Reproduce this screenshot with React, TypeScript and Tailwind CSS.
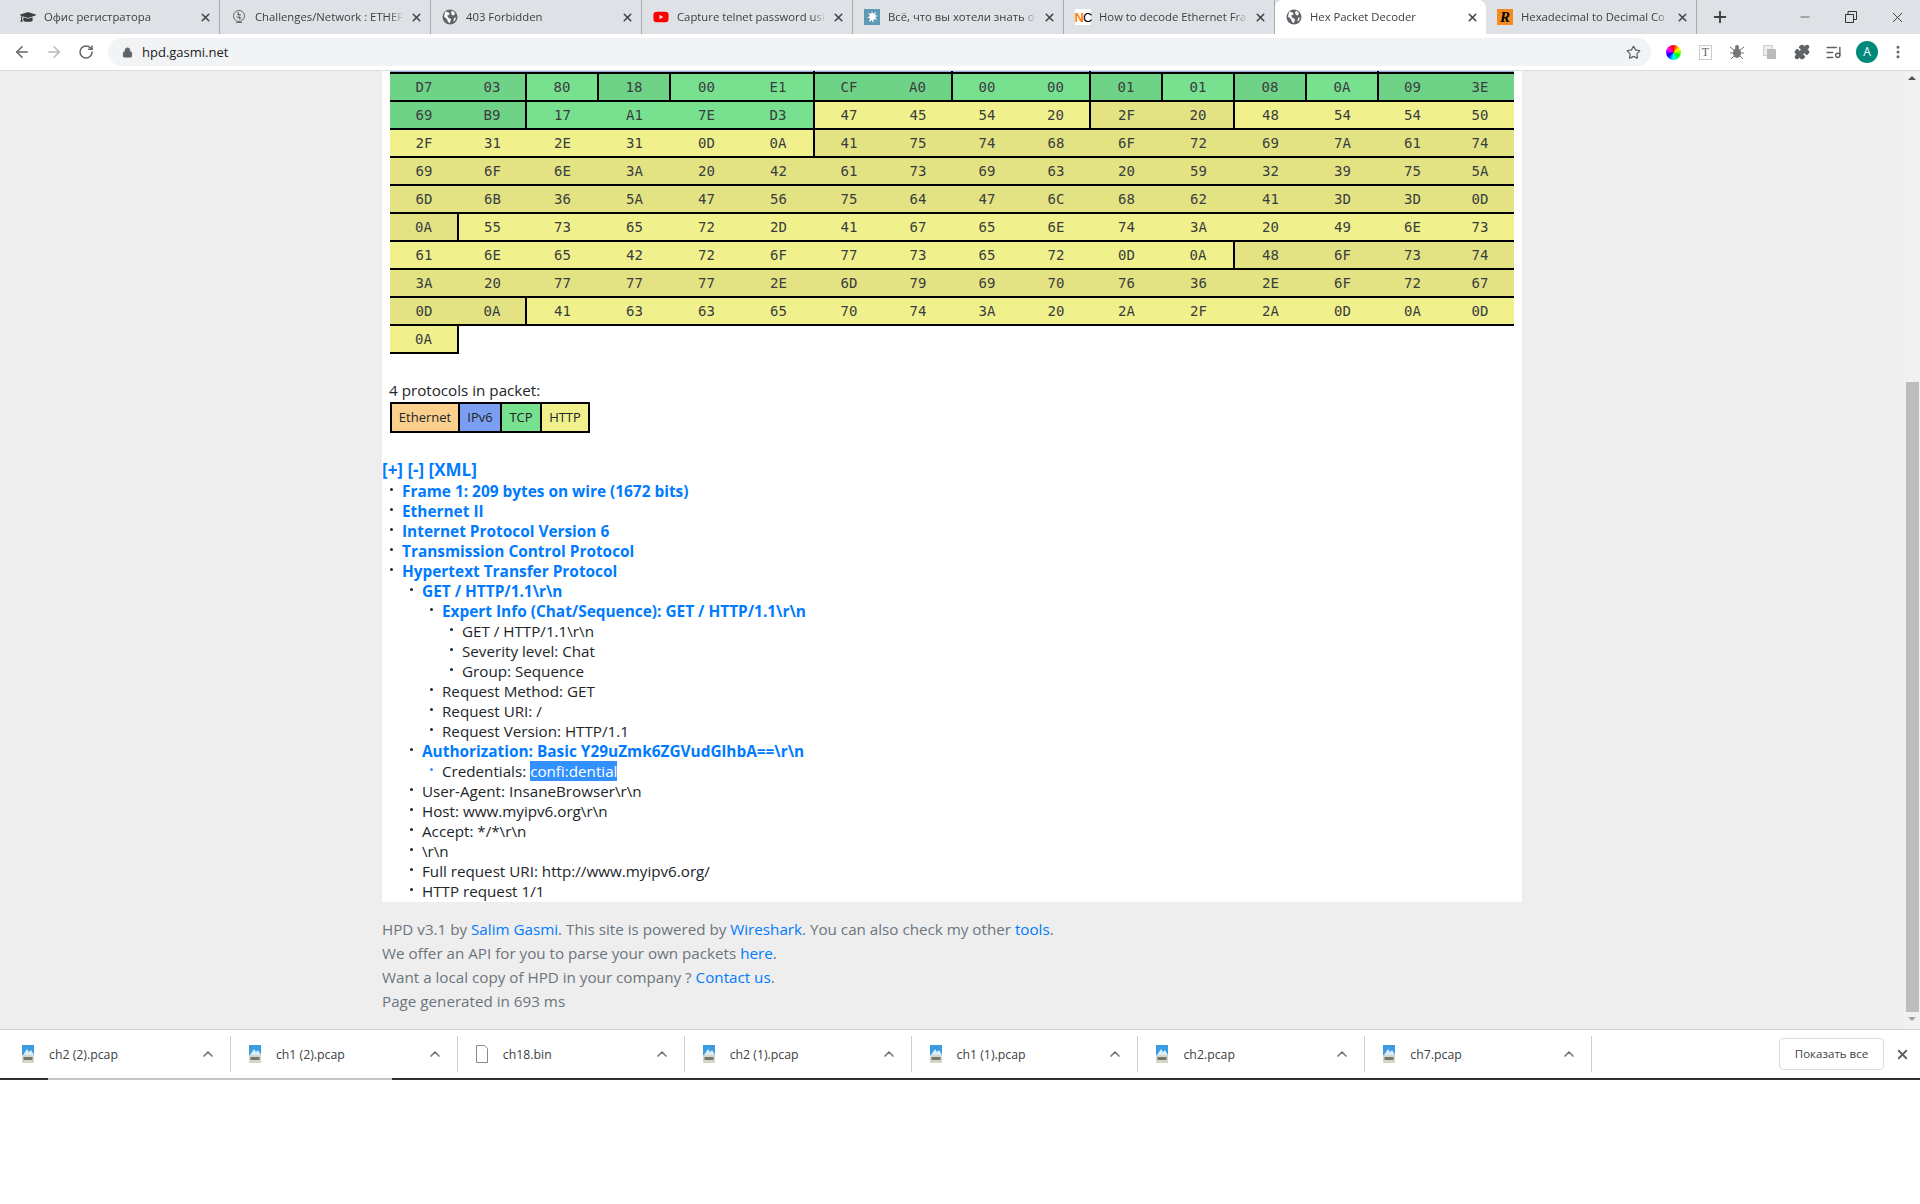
import React from 'react';
import { ArrowLeft, ArrowRight, RotateCw, Lock, Star, X, Plus, Minus, ChevronUp, Puzzle, MoreVertical, ListMusic } from 'lucide-react';
import { FaYoutube, FaGraduationCap } from 'react-icons/fa';

const SANS = "font-['Open_Sans','Noto_Sans',sans-serif]";

const GREEN = 'bg-[#78e190]';
const GREEN_DK = 'bg-[#6fd387]';
const YEL = 'bg-[#f0f18c]';
const YEL_DK = 'bg-[#e3e384]';
const CUT = 'bg-[#9fb0e0]';

type Group = { shade: string; bytes: string[] };

// last row of the IPv6 part, scrolled almost out of view
const CUT_ROW: Group[] = [
  { shade: CUT, bytes: ['', '', '', '', '', ''] },
  { shade: CUT, bytes: ['', ''] },
  { shade: CUT, bytes: ['', ''] },
  { shade: CUT, bytes: ['', '', '', ''] },
  { shade: CUT, bytes: ['', ''] },
];

const ROWS: Group[][] = [
  [
    { shade: GREEN_DK, bytes: ['D7', '03'] },
    { shade: GREEN, bytes: ['80'] },
    { shade: GREEN_DK, bytes: ['18'] },
    { shade: GREEN, bytes: ['00', 'E1'] },
    { shade: GREEN_DK, bytes: ['CF', 'A0'] },
    { shade: GREEN, bytes: ['00', '00'] },
    { shade: GREEN_DK, bytes: ['01'] },
    { shade: GREEN, bytes: ['01'] },
    { shade: GREEN_DK, bytes: ['08'] },
    { shade: GREEN, bytes: ['0A'] },
    { shade: GREEN_DK, bytes: ['09', '3E'] },
  ],
  [
    { shade: GREEN_DK, bytes: ['69', 'B9'] },
    { shade: GREEN, bytes: ['17', 'A1', '7E', 'D3'] },
    { shade: YEL, bytes: ['47', '45', '54', '20'] },
    { shade: YEL_DK, bytes: ['2F', '20'] },
    { shade: YEL, bytes: ['48', '54', '54', '50'] },
  ],
  [
    { shade: YEL, bytes: ['2F', '31', '2E', '31', '0D', '0A'] },
    { shade: YEL_DK, bytes: ['41', '75', '74', '68', '6F', '72', '69', '7A', '61', '74'] },
  ],
  [{ shade: YEL_DK, bytes: ['69', '6F', '6E', '3A', '20', '42', '61', '73', '69', '63', '20', '59', '32', '39', '75', '5A'] }],
  [{ shade: YEL_DK, bytes: ['6D', '6B', '36', '5A', '47', '56', '75', '64', '47', '6C', '68', '62', '41', '3D', '3D', '0D'] }],
  [
    { shade: YEL_DK, bytes: ['0A'] },
    { shade: YEL, bytes: ['55', '73', '65', '72', '2D', '41', '67', '65', '6E', '74', '3A', '20', '49', '6E', '73'] },
  ],
  [
    { shade: YEL, bytes: ['61', '6E', '65', '42', '72', '6F', '77', '73', '65', '72', '0D', '0A'] },
    { shade: YEL_DK, bytes: ['48', '6F', '73', '74'] },
  ],
  [{ shade: YEL_DK, bytes: ['3A', '20', '77', '77', '77', '2E', '6D', '79', '69', '70', '76', '36', '2E', '6F', '72', '67'] }],
  [
    { shade: YEL_DK, bytes: ['0D', '0A'] },
    { shade: YEL, bytes: ['41', '63', '63', '65', '70', '74', '3A', '20', '2A', '2F', '2A', '0D', '0A', '0D'] },
  ],
  [{ shade: YEL, bytes: ['0A'] }],
];

function HexRow({ groups }: { groups: Group[] }) {
  const cells = groups.flatMap((g, gi) =>
    g.bytes.map((b, i) => ({ b, shade: g.shade, edge: i === g.bytes.length - 1 && gi < groups.length - 1 })),
  );
  const single = cells.length === 1;
  return (
    <div className="grid h-[28px] grid-cols-[69px_68px_72px_72px_72px_72px_69px_69px_69px_69px_72px_72px_72px_72px_68px_67px]">
      {cells.map((c, i) => (
        <div
          key={i}
          className={`flex items-center justify-center border-b-2 border-black pt-[1px] ${c.shade} ${c.edge || single ? 'border-r-2' : 'pr-[1px]'}`}
        >
          {c.b}
        </div>
      ))}
    </div>
  );
}

type Node = { text: string; depth: number; link?: boolean; selected?: string };

const TREE: Node[] = [
  { text: 'Frame 1: 209 bytes on wire (1672 bits)', depth: 0, link: true },
  { text: 'Ethernet II', depth: 0, link: true },
  { text: 'Internet Protocol Version 6', depth: 0, link: true },
  { text: 'Transmission Control Protocol', depth: 0, link: true },
  { text: 'Hypertext Transfer Protocol', depth: 0, link: true },
  { text: 'GET / HTTP/1.1\\r\\n', depth: 1, link: true },
  { text: 'Expert Info (Chat/Sequence): GET / HTTP/1.1\\r\\n', depth: 2, link: true },
  { text: 'GET / HTTP/1.1\\r\\n', depth: 3 },
  { text: 'Severity level: Chat', depth: 3 },
  { text: 'Group: Sequence', depth: 3 },
  { text: 'Request Method: GET', depth: 2 },
  { text: 'Request URI: /', depth: 2 },
  { text: 'Request Version: HTTP/1.1', depth: 2 },
  { text: 'Authorization: Basic Y29uZmk6ZGVudGlhbA==\\r\\n', depth: 1, link: true },
  { text: 'Credentials: ', depth: 2, selected: 'confi:dential' },
  { text: 'User-Agent: InsaneBrowser\\r\\n', depth: 1 },
  { text: 'Host: www.myipv6.org\\r\\n', depth: 1 },
  { text: 'Accept: */*\\r\\n', depth: 1 },
  { text: '\\r\\n', depth: 1 },
  { text: 'Full request URI: http://www.myipv6.org/', depth: 1 },
  { text: 'HTTP request 1/1', depth: 1 },
];

const INDENT = ['pl-[8px]', 'pl-[28px]', 'pl-[48px]', 'pl-[68px]'];

function TreeLine({ node }: { node: Node }) {
  return (
    <div className={`flex h-[20px] items-center ${INDENT[node.depth]}`}>
      <span className={`mb-[5px] mr-[9px] h-[3px] w-[3px] shrink-0 rounded-full ${node.selected ? 'bg-[#3390ff]' : 'bg-[#212529]'}`} />
      {node.link ? (
        <span className="text-[15.4px] font-bold text-[#007bff]">{node.text}</span>
      ) : (
        <span className="-mt-[2px] whitespace-pre text-[#212529]">
          {node.text}
          {node.selected && <span className="bg-[#3390ff] text-white">{node.selected}</span>}
        </span>
      )}
    </div>
  );
}

function Globe() {
  return (
    <svg viewBox="0 0 16 16" className="h-4 w-4 shrink-0">
      <circle cx="8" cy="8" r="7.5" fill="#5f6368" />
      <path d="M4 2.5 7.5 4 7 6 5 6.5 6.5 9 9 10l-1 4-2-1-1-3-3-2.5 1-4Z M10 1.5l3 2.5-1 2.5-2-.5-1-2Z M12 9l2-.5-1 3-1.5 1Z" fill="#fff" />
    </svg>
  );
}

function Favicon({ kind }: { kind: string }) {
  if (kind === 'cap') return <FaGraduationCap className="h-4 w-4 shrink-0 text-[#3c3c3c]" />;
  if (kind === 'globe') return <Globe />;
  if (kind === 'yt') return <FaYoutube className="h-4 w-4 shrink-0 text-[#f00]" />;
  if (kind === 'root')
    return (
      <svg viewBox="0 0 16 16" className="h-4 w-4 shrink-0" fill="none" stroke="#6b6b6b">
        <circle cx="8" cy="7" r="5.5" />
        <path d="M5 13.5h6M6 5l4 1M5.5 8l5 1M7 3l2 8" />
      </svg>
    );
  if (kind === 'splat')
    return (
      <svg viewBox="0 0 16 16" className="h-4 w-4 shrink-0">
        <rect width="16" height="16" fill="#5e9ab8" />
        <path d="M8 2l1 3 3-2-1 3 3 1-3 1 2 3-3-1-1 4-1-3-3 2 1-4-3 0 3-2-2-3 3 1Z" fill="#fff" />
      </svg>
    );
  if (kind === 'nc')
    return (
      <span className="flex h-4 w-4 shrink-0 items-center justify-center bg-white font-['Liberation_Sans',sans-serif] text-[13px] font-bold leading-none tracking-[-1px]">
        <span className="text-[#ff7f0e]">N</span>
        <span className="font-normal text-black">C</span>
      </span>
    );
  return (
    <span className="flex h-4 w-4 shrink-0 items-center justify-center bg-[#f58a1f] font-['Liberation_Serif',serif] text-[15px] font-bold italic leading-none text-black">
      R
    </span>
  );
}

const TABS = [
  { icon: 'cap', title: 'Офис регистратора' },
  { icon: 'root', title: 'Challenges/Network : ETHEF' },
  { icon: 'globe', title: '403 Forbidden' },
  { icon: 'yt', title: 'Capture telnet password usi' },
  { icon: 'splat', title: 'Всё, что вы хотели знать о' },
  { icon: 'nc', title: 'How to decode Ethernet Fra' },
  { icon: 'globe', title: 'Hex Packet Decoder', active: true },
  { icon: 'r', title: 'Hexadecimal to Decimal Co' },
];

function Tab({ icon, title, active }: { icon: string; title: string; active?: boolean }) {
  return (
    <div className={`flex h-[34px] w-[211px] shrink-0 items-center pl-[11px] pr-[7px] ${active ? 'rounded-t-[8px] bg-white' : 'border-r border-[#a9abaf]'}`}>
      <Favicon kind={icon} />
      <span className="ml-[8px] min-w-0 flex-1 overflow-hidden whitespace-nowrap text-[11.3px] text-[#3c4043] [mask-image:linear-gradient(to_right,black_90%,transparent)]">{title}</span>
      <X className="ml-[6px] h-[13px] w-[13px] shrink-0 text-[#45494d]" strokeWidth={3} />
    </div>
  );
}

function FileIcon({ blank }: { blank?: boolean }) {
  if (blank)
    return (
      <svg viewBox="0 0 14 18" className="h-[18px] w-[14px] shrink-0" fill="#fff" stroke="#8a8a8a">
        <path d="M1.5.5h8l3 3v14h-11Z" />
      </svg>
    );
  return (
    <svg viewBox="0 0 14 18" className="h-[18px] w-[14px] shrink-0">
      <rect x="1" width="12" height="18" fill="#d5d5c8" />
      <rect x="1" width="12" height="10" fill="#3a9be0" />
      <path d="M2 10 6 4l2 3 2-2 3 5Z" fill="#d8ecf9" />
      <rect x="2.5" y="12" width="9" height="3" fill="#77776a" />
    </svg>
  );
}

const DOWNLOADS = [
  { name: 'ch2 (2).pcap' },
  { name: 'ch1 (2).pcap' },
  { name: 'ch18.bin', blank: true },
  { name: 'ch2 (1).pcap' },
  { name: 'ch1 (1).pcap' },
  { name: 'ch2.pcap' },
  { name: 'ch7.pcap' },
];

const linkCls = 'text-[#007bff]';

export default function App() {
  return (
    <div className={`flex h-[1204px] w-[1920px] flex-col overflow-hidden bg-white ${SANS}`}>
      {/* tab strip */}
      <div className="flex h-[34px] shrink-0 items-center bg-[#dee1e6] pl-[9px]">
        {TABS.map((t, i) => (
          <Tab key={i} {...t} />
        ))}
        <Plus className="ml-[14px] h-[18px] w-[18px] text-[#3c4043]" strokeWidth={2.5} />
        <div className="ml-auto flex items-center">
          <div className="flex w-[46px] justify-center"><Minus className="h-[14px] w-[14px] text-[#333]" strokeWidth={1.2} /></div>
          <div className="flex w-[46px] justify-center">
            <svg viewBox="0 0 12 12" className="h-[12px] w-[12px]" fill="none" stroke="#333"><path d="M.5 3.5h8v8h-8ZM3 3.5V.5h8.5v8H8.5" /></svg>
          </div>
          <div className="flex w-[46px] justify-center"><X className="h-[17px] w-[17px] text-[#333]" strokeWidth={1.3} /></div>
        </div>
      </div>

      {/* toolbar */}
      <div className="flex h-[37px] shrink-0 items-center border-b border-[#dadce0] bg-white">
        <ArrowLeft className="ml-[13px] h-[18px] w-[18px] text-[#5f6368]" strokeWidth={2} />
        <ArrowRight className="ml-[14px] h-[18px] w-[18px] text-[#b5b7ba]" strokeWidth={2} />
        <RotateCw className="ml-[15px] h-[16px] w-[16px] text-[#5f6368]" strokeWidth={2.2} />
        <div className="ml-[14px] flex h-[28px] w-[1543px] items-center rounded-full bg-[#f1f3f4] pl-[14px] pr-[10px]">
          <Lock className="h-[11px] w-[11px] fill-[#5f6368] text-[#5f6368]" />
          <span className="ml-[9px] mt-[1px] text-[13px] text-[#202124]">hpd.gasmi.net</span>
          <Star className="ml-auto h-[15px] w-[15px] text-[#5f6368]" strokeWidth={2} />
        </div>
        <div className="ml-[15px] h-[15px] w-[15px] rounded-full bg-[conic-gradient(#f00,#ff0,#0f0,#0ff,#00f,#f0f,#f00)]" />
        <span className="ml-[18px] flex h-[15px] w-[13px] items-center justify-center border border-[#ccc] font-['Liberation_Serif',serif] text-[12px] leading-none text-[#666]">T</span>
        <svg viewBox="0 0 16 16" className="ml-[17px] h-[16px] w-[16px]" fill="#777"><ellipse cx="8" cy="9" rx="4" ry="5" /><circle cx="8" cy="3" r="2" /><path d="M1 3l4 3M15 3l-4 3M1 9h4M15 9h-4M2 15l3-3M14 15l-3-3" stroke="#777" fill="none" /></svg>
        <svg viewBox="0 0 14 14" className="ml-[18px] h-[14px] w-[14px]"><rect x="0.5" y="0.5" width="9" height="10" fill="#eee" stroke="#ccc" /><rect x="4" y="4" width="9" height="10" fill="#bbb" /></svg>
        <Puzzle className="ml-[17px] h-[16px] w-[16px] fill-[#5f6368] text-[#5f6368]" />
        <ListMusic className="ml-[15px] h-[17px] w-[17px] text-[#5f6368]" />
        <div className="ml-[14px] flex h-[22px] w-[22px] items-center justify-center rounded-full bg-[#00897b] text-[12px] text-white">A</div>
        <MoreVertical className="ml-[12px] h-[16px] w-[16px] text-[#5f6368]" strokeWidth={2.5} />
      </div>

      {/* viewport */}
      <div className="flex h-[958px] shrink-0 overflow-hidden bg-[#eeeeee]">
        <div className="flex-1 pl-[382px]">
          <div className="w-[1140px] overflow-hidden bg-white">
            <div className="-mt-[25px] px-[8px] font-['DejaVu_Sans_Mono',monospace] text-[14px] text-[#3a3d40]">
              <HexRow groups={CUT_ROW} />
              {ROWS.map((groups, i) => (
                <HexRow key={i} groups={groups} />
              ))}
            </div>

            <div className="mt-[25px] pl-[7px] text-[15.2px] leading-[23px] text-[#212529]">4 protocols in packet:</div>
            <div className="ml-[8px] flex h-[31px] w-fit border-2 border-black text-[13px] text-[#212529]">
              <div className="flex w-[68px] items-center justify-center border-r-2 border-black bg-[#fad08c] pt-[1px]">Ethernet</div>
              <div className="flex w-[42px] items-center justify-center border-r-2 border-black bg-[#7b9ff0] pt-[1px]">IPv6</div>
              <div className="flex w-[40px] items-center justify-center border-r-2 border-black bg-[#78e190] pt-[1px]">TCP</div>
              <div className="flex w-[46px] items-center justify-center bg-[#f0f18c] pt-[1px]">HTTP</div>
            </div>

            <div className="mt-[26px] text-[15.2px]">
              <div className="mb-[1px] flex h-[22px] items-center text-[17px] font-bold text-[#007bff]">[+] [-] [XML]</div>
              {TREE.map((n, i) => (
                <TreeLine key={i} node={n} />
              ))}
            </div>
          </div>
          <div className="mt-[15px] text-[15.2px] leading-[24px] text-[#6c757d]">
            <div>
              HPD v3.1 by <span className={linkCls}>Salim Gasmi</span>. This site is powered by <span className={linkCls}>Wireshark</span>. You can also check my other <span className={linkCls}>tools</span>.
            </div>
            <div>
              We offer an API for you to parse your own packets <span className={linkCls}>here</span>.
            </div>
            <div>
              Want a local copy of HPD in your company ? <span className={linkCls}>Contact us</span>.
            </div>
            <div>Page generated in 693 ms</div>
          </div>
        </div>
        {/* scrollbar */}
        <div className="flex w-[16px] shrink-0 flex-col items-center bg-[#f1f1f1]">
          <div className="mt-[5px] h-0 w-0 border-x-[4px] border-b-[4px] border-x-transparent border-b-[#505050]" />
          <div className="mt-[302px] h-[630px] w-[13px] bg-[#bdbdbd]" />
          <div className="mt-[5px] h-0 w-0 border-x-[4px] border-t-[4px] border-x-transparent border-t-[#a0a0a0]" />
        </div>
      </div>

      {/* download shelf */}
      <div className="flex h-[51px] shrink-0 flex-col border-t border-[#d4d4d4] bg-white">
        <div className="flex flex-1 items-center pl-[4px]">
          {DOWNLOADS.map((d, i) => (
            <div key={i} className="flex h-[36px] w-[226.9px] shrink-0 items-center border-r border-[#cfcfcf] pl-[17px] pr-[14px]">
              <FileIcon blank={d.blank} />
              <span className="ml-[14px] mt-[3px] text-[12.3px] text-[#3c4043]">{d.name}</span>
              <ChevronUp className="ml-auto h-[16px] w-[16px] text-[#777]" strokeWidth={2.5} />
            </div>
          ))}
          <div className="ml-auto mr-[10px] flex items-center">
            <div className="flex h-[32px] w-[105px] items-center justify-center rounded-[4px] border border-[#dadce0] text-[11.5px] text-[#3c4043]">Показать все</div>
            <X className="ml-[11px] h-[15px] w-[15px] text-[#5f6368]" strokeWidth={3} />
          </div>
        </div>
        <div className="flex h-[2px] shrink-0 bg-[#2f2f2f]">
          <div className="ml-[48px] w-[344px] bg-[#c4c4c4]" />
        </div>
      </div>
    </div>
  );
}
